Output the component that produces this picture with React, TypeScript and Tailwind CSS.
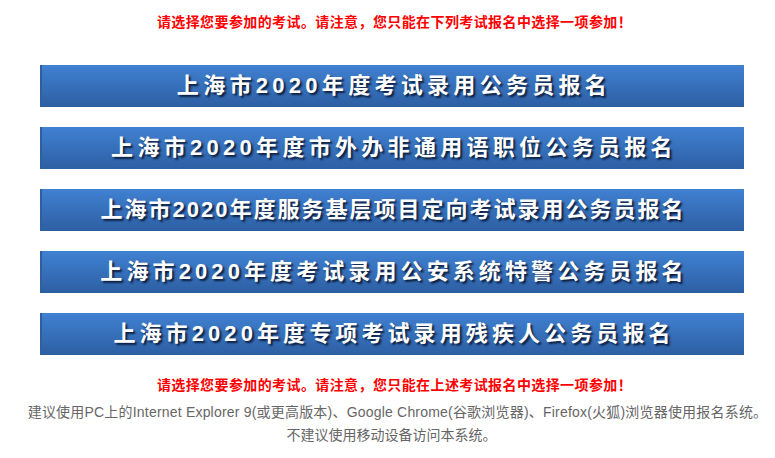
import React from "react";

const items: { text: string; cls: string }[] = [
  { text: "上海市2020年度考试录用公务员报名", cls: "tracking-[4.3px] pl-[4px]" },
  { text: "上海市2020年度市外办非通用语职位公务员报名", cls: "tracking-[4.3px] pl-[4px]" },
  { text: "上海市2020年度服务基层项目定向考试录用公务员报名", cls: "tracking-[2px] pl-[2px]" },
  { text: "上海市2020年度考试录用公安系统特警公务员报名", cls: "tracking-[4.1px] pl-[4px]" },
  { text: "上海市2020年度专项考试录用残疾人公务员报名", cls: "tracking-[4.1px] pl-[4px]" },
];

export default function App() {
  return (
    <div className="w-[775px] h-[458px] bg-white font-['Liberation_Sans','Noto_Sans_CJK_SC',sans-serif]">
      <p className="pt-[14px] pl-[14px] text-center text-[14px] leading-[16px] font-bold tracking-[0.4px] text-[#ff0000]">
        请选择您要参加的考试。请注意，您只能在下列考试报名中选择一项参加！
      </p>
      <div className="mt-[35px] ml-[40px] w-[704px] flex flex-col gap-[20px]">
        {items.map((it) => (
          <a
            key={it.text}
            href="#"
            className={`h-[42px] flex items-center justify-center bg-gradient-to-b from-[#4081d2] to-[#2d5fa3] shadow-[inset_2px_0_0_#2f5f9f] text-white font-bold text-[22px] leading-none [text-shadow:2px_2px_2px_rgba(5,15,40,0.85)] ${it.cls}`}
          >
            {it.text}
          </a>
        ))}
      </div>
      <p className="mt-[22px] pl-[14px] text-center text-[14px] leading-[16px] font-bold tracking-[0.4px] text-[#ff0000]">
        请选择您要参加的考试。请注意，您只能在上述考试报名中选择一项参加！
      </p>
      <div className="mt-[8px] text-center text-[14px] leading-[23px] text-[#666666]">
        <p className="pl-[20px] tracking-[0.2px] whitespace-nowrap">
          建议使用PC上的Internet Explorer 9(或更高版本)、Google Chrome(谷歌浏览器)、Firefox(火狐)浏览器使用报名系统。
        </p>
        <p className="pl-[8px]">不建议使用移动设备访问本系统。</p>
      </div>
    </div>
  );
}
